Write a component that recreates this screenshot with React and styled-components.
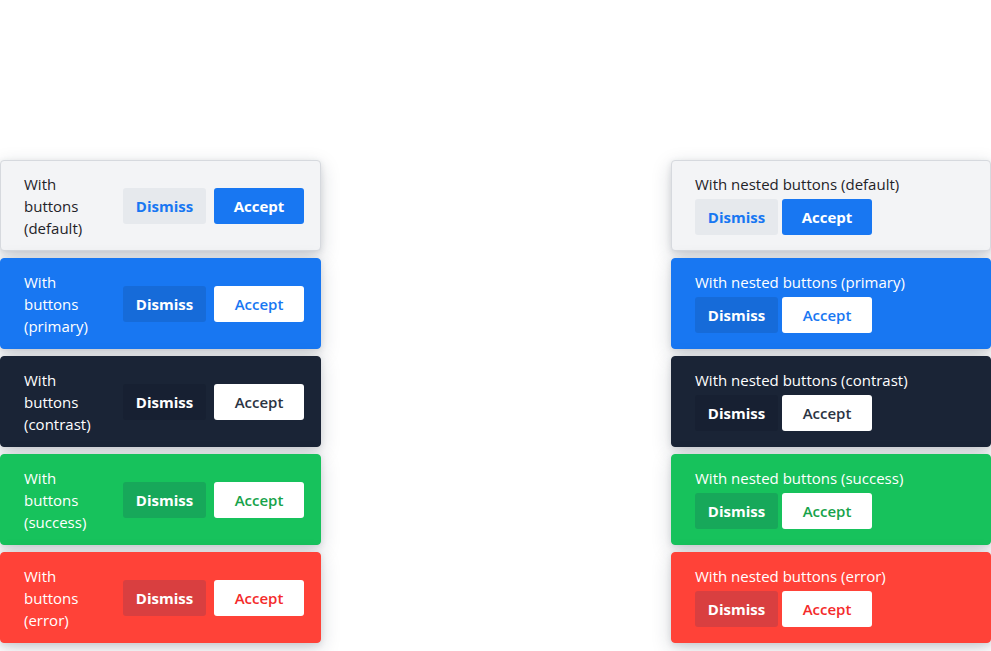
import React from "react";
import styled, { createGlobalStyle } from "styled-components";

const GlobalStyle = createGlobalStyle`
  html, body {
    margin: 0;
    padding: 0;
    background: #ffffff;
  }
  body {
    font-family: "Segoe UI", "Open Sans", "Noto Sans", sans-serif;
  }
`;

const variants = {
  default: {
    bg: "#f3f4f6",
    border: "#d6d9de",
    text: "#1f2328",
    dismissBg: "#e6e9ed",
    dismissText: "#1877f2",
    acceptBg: "#1877f2",
    acceptText: "#ffffff",
    acceptWeight: 700,
  },
  primary: {
    bg: "#1877f2",
    border: "#1877f2",
    text: "#ffffff",
    dismissBg: "#166bd9",
    dismissText: "#ffffff",
    acceptBg: "#ffffff",
    acceptText: "#1877f2",
    acceptWeight: 600,
  },
  contrast: {
    bg: "#1a2436",
    border: "#1a2436",
    text: "#ffffff",
    dismissBg: "#172032",
    dismissText: "#ffffff",
    acceptBg: "#ffffff",
    acceptText: "#2b3443",
    acceptWeight: 600,
  },
  success: {
    bg: "#17c25c",
    border: "#17c25c",
    text: "#ffffff",
    dismissBg: "#17a85a",
    dismissText: "#ffffff",
    acceptBg: "#ffffff",
    acceptText: "#16a34a",
    acceptWeight: 600,
  },
  error: {
    bg: "#ff4238",
    border: "#ff4238",
    text: "#ffffff",
    dismissBg: "#d93f40",
    dismissText: "#ffffff",
    acceptBg: "#ffffff",
    acceptText: "#f42b2b",
    acceptWeight: 600,
  },
};

const names = ["default", "primary", "contrast", "success", "error"];

export default function App() {
  return (
    <>
      <GlobalStyle />
      <Page>
        <Column width={321}>
          {names.map((name) => (
            <Toast key={name} v={variants[name]}>
              <Message>With buttons ({name})</Message>
              <Actions>
                <DismissButton v={variants[name]}>Dismiss</DismissButton>
                <AcceptButton v={variants[name]}>Accept</AcceptButton>
              </Actions>
            </Toast>
          ))}
        </Column>
        <Column width={320}>
          {names.map((name) => (
            <NestedToast key={name} v={variants[name]}>
              <NestedMessage>With nested buttons ({name})</NestedMessage>
              <NestedActions>
                <DismissButton v={variants[name]}>Dismiss</DismissButton>
                <AcceptButton v={variants[name]}>Accept</AcceptButton>
              </NestedActions>
            </NestedToast>
          ))}
        </Column>
      </Page>
    </>
  );
}

const Page = styled.div`
  width: 991px;
  height: 651px;
  box-sizing: border-box;
  padding-top: 160px;
  display: flex;
  justify-content: space-between;
  align-items: flex-start;
  overflow: hidden;
`;

const Column = styled.div`
  width: ${(p) => p.width}px;
  display: flex;
  flex-direction: column;
  gap: 8px;
`;

const Toast = styled.div`
  box-sizing: border-box;
  height: 91px;
  margin-bottom: -1px;
  display: flex;
  align-items: center;
  padding: 0 16px 0 23px;
  background: ${(p) => p.v.bg};
  border: 1px solid ${(p) => p.v.border};
  border-radius: 4px;
  color: ${(p) => p.v.text};
  box-shadow: 0 2px 6px rgba(30, 41, 59, 0.12), 0 6px 20px rgba(30, 41, 59, 0.18);
`;

const Message = styled.div`
  flex: 1;
  font-size: 15px;
  line-height: 22px;
`;

const Actions = styled.div`
  display: flex;
  gap: 8px;
  margin-left: 16px;
`;

const NestedToast = styled.div`
  box-sizing: border-box;
  height: 91px;
  margin-bottom: -1px;
  padding: 12px 16px 0 23px;
  background: ${(p) => p.v.bg};
  border: 1px solid ${(p) => p.v.border};
  border-radius: 4px;
  color: ${(p) => p.v.text};
  box-shadow: 0 2px 6px rgba(30, 41, 59, 0.12), 0 6px 20px rgba(30, 41, 59, 0.18);
`;

const NestedMessage = styled.div`
  font-size: 15px;
  line-height: 22px;
`;

const NestedActions = styled.div`
  display: flex;
  gap: 4px;
  margin-top: 4px;
`;

const Button = styled.button`
  height: 36px;
  border: none;
  border-radius: 3px;
  font-family: inherit;
  font-size: 15px;
  cursor: pointer;
  padding: 0;
`;

const DismissButton = styled(Button)`
  width: 83px;
  font-weight: 700;
  background: ${(p) => p.v.dismissBg};
  color: ${(p) => p.v.dismissText};
`;

const AcceptButton = styled(Button)`
  width: 90px;
  font-weight: ${(p) => p.v.acceptWeight};
  background: ${(p) => p.v.acceptBg};
  color: ${(p) => p.v.acceptText};
`;
